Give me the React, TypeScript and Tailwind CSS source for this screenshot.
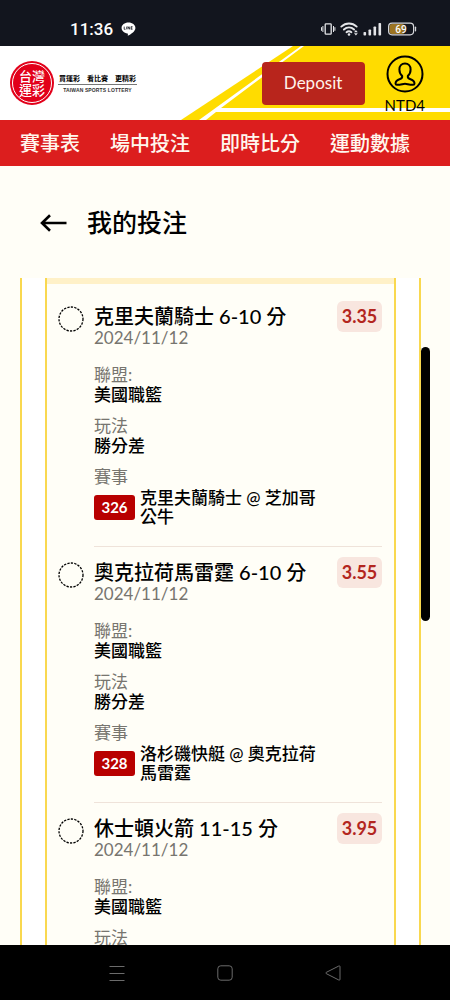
import type { ReactNode } from 'react'

// ─── Data ─────────────────────────────────────────────────────────────────────
const NAV_ITEMS = ['賽事表', '場中投注', '即時比分', '運動數據']

interface Bet {
  id: string
  pick: string
  date: string
  odds: string
  league: string
  market: string
  match: string
}

const BETS: Bet[] = [
  {
    id: '326',
    pick: '克里夫蘭騎士 6-10 分',
    date: '2024/11/12',
    odds: '3.35',
    league: '美國職籃',
    market: '勝分差',
    match: '克里夫蘭騎士 @ 芝加哥公牛',
  },
  {
    id: '328',
    pick: '奧克拉荷馬雷霆 6-10 分',
    date: '2024/11/12',
    odds: '3.55',
    league: '美國職籃',
    market: '勝分差',
    match: '洛杉磯快艇 @ 奧克拉荷馬雷霆',
  },
  {
    id: '',
    pick: '休士頓火箭 11-15 分',
    date: '2024/11/12',
    odds: '3.95',
    league: '美國職籃',
    market: '',
    match: '',
  },
]

// ─── Phone status bar ─────────────────────────────────────────────────────────
function StatusBar() {
  return (
    <div className="flex h-[46px] shrink-0 items-center justify-between bg-[#12151e] pt-3 pr-8 pl-[70px] text-white">
      <div className="flex items-center gap-2">
        <span className="font-[Roboto,sans-serif] text-[17px] leading-5 font-medium">11:36</span>
        <svg width="15" height="14" viewBox="0 0 15 14" aria-label="LINE">
          <path
            d="M7.5.5C3.6.5.6 2.900.6 6c0 2.800 2.400 5 5.800 5.400.5.1.6.4.5.900l-.1 1.100c0 .3.200.4.500.2 3-1.600 7.100-4.300 7.100-7.600C14.400 2.900 11.400.5 7.500.5Z"
            fill="#fff"
          />
          <path
            d="M3.200 4.600v2.700h1.300M5.700 4.600v2.700M7 7.300V4.600l1.700 2.700V4.600M11.500 4.600h-1.300v2.700h1.300M10.200 6h1.200"
            fill="none"
            stroke="#12151e"
            strokeWidth=".8"
          />
        </svg>
      </div>

      <svg width="98" height="16" viewBox="0 0 98 16" fill="none" aria-hidden="true">
        {/* vibrate */}
        <g stroke="#e4e5e8" strokeWidth="1.300">
          <rect x="5.200" y="2.800" width="6" height="10.400" rx=".8" />
          <path d="M2.900 5v6M13.500 5v6M1.500 6.200v3.600M14.900 6.200v3.600" strokeWidth="1" />
        </g>
        {/* wifi */}
        <g stroke="#e4e5e8" strokeWidth="1.900" strokeLinecap="round">
          <path d="M21.300 5.600c4.500-4.200 10.900-4.200 15.400 0M23.900 8.500c3-2.700 7.200-2.700 10.200 0M26.500 11.200c1.500-1.300 3.400-1.300 4.900 0" />
        </g>
        <circle cx="29" cy="13.500" r="1.300" fill="#e4e5e8" />
        <path d="M34 11.300l1.900-2.200 1.900 2.200ZM34 12.300l1.900 2.200 1.900-2.200Z" fill="#e4e5e8" />
        {/* signal */}
        <g fill="#e4e5e8">
          <rect x="43.500" y="11" width="2.600" height="3.500" rx=".8" />
          <rect x="48.500" y="8.500" width="2.600" height="6" rx=".8" />
          <rect x="53.500" y="5.500" width="2.600" height="9" rx=".8" />
          <rect x="58.500" y="2" width="2.600" height="12.500" rx=".8" />
        </g>
        {/* battery */}
        <rect x="69.500" y="3" width="15" height="10" rx="2.500" fill="#9c7422" />
        <rect x="68.600" y="2.200" width="25" height="11.600" rx="3.500" stroke="#d5d6da" strokeWidth="1.200" />
        <path d="M95.500 6.200v3.600" stroke="#d5d6da" strokeWidth="1.300" strokeLinecap="round" />
        <text x="81" y="11.500" fill="#fff" textAnchor="middle" className="font-[Roboto,sans-serif] text-[10px] font-medium">
          69
        </text>
      </svg>
    </div>
  )
}

// ─── Brand header ─────────────────────────────────────────────────────────────
function Brand() {
  return (
    <a href="#" className="flex items-center gap-1">
      <span className="flex size-[44px] items-center justify-center rounded-full bg-[#e2001a]">
        <span className="flex size-10 flex-col items-center justify-center rounded-full border border-white text-[13px] leading-[14px] font-medium text-white">
          <span>台灣</span>
          <span>運彩</span>
        </span>
      </span>
      <span className="flex flex-col items-center">
        <span className="flex gap-[7px] border-b border-[#777] px-px text-[7px] leading-3 font-bold text-black">
          <span>買運彩</span>
          <span>看比賽</span>
          <span>更精彩</span>
        </span>
        <span className="font-['Liberation_Sans',sans-serif] text-[5px] leading-[10px] font-bold tracking-wide whitespace-nowrap text-[#333]">
          TAIWAN SPORTS LOTTERY
        </span>
      </span>
    </a>
  )
}

function Header() {
  return (
    <header className="relative flex h-[74px] shrink-0 items-center justify-between bg-white pr-[25px] pl-[10px]">
      <svg
        className="absolute top-0 right-0 h-full"
        width="270"
        height="74"
        viewBox="180 0 270 74"
        aria-hidden="true"
      >
        <path d="M181 74 293 0H450V74Z" fill="#ffdc00" />
        <path d="M199 74 301 0H304L221 62H450V66H216L206 74Z" fill="#fff" />
      </svg>
      <Brand />
      <div className="relative flex items-center gap-5">
        <button className="h-[43px] w-[103px] rounded bg-[#b8251c] text-[17px] text-[#fff3ea]">Deposit</button>
        <button className="flex flex-col items-center gap-[2px] pt-1 text-[15px] leading-5 text-black">
          <svg width="38" height="38" viewBox="0 0 38 38" fill="none" stroke="#000" strokeWidth="2" aria-hidden="true">
            <circle cx="19" cy="19" r="17.500" />
            <path d="M19 8.500c-3.400 0-5.600 2.500-5.600 5.900 0 2.700 1 5 2.700 6.400.5 1.800-.3 2.600-2 3.200-2.700 1-4.600 2-4.600 4.400 0 .8.500 1.300 1.400 1.300h2.900c1.700 0 3.300-.9 5.200-.9s3.500.9 5.200.9h2.900c.9 0 1.400-.5 1.400-1.300 0-2.400-1.900-3.400-4.600-4.400-1.700-.6-2.500-1.400-2-3.200 1.700-1.400 2.700-3.700 2.700-6.400 0-3.400-2.200-5.900-5.600-5.900Z" strokeLinejoin="round" />
          </svg>
          NTD4
        </button>
      </div>
    </header>
  )
}

function MainNav() {
  return (
    <nav className="flex h-[46px] shrink-0 items-center gap-[30px] bg-[#dc1e1e] px-5">
      {NAV_ITEMS.map((item) => (
        <a key={item} href="#" className="text-[20px] font-medium whitespace-nowrap text-[#fff7ee]">
          {item}
        </a>
      ))}
    </nav>
  )
}

// ─── Bet rows ─────────────────────────────────────────────────────────────────
function Field({ label, children }: { label: string; children?: ReactNode }) {
  return (
    <div>
      <dt className="text-[#77756f]">{label}</dt>
      <dd className="font-medium text-black">{children}</dd>
    </div>
  )
}

function BetItem({ bet }: { bet: Bet }) {
  return (
    <li className="flex items-start gap-[10px] pt-[10px] pr-3 pl-[11px]">
      <svg className="mt-[5px] shrink-0" width="26" height="26" viewBox="0 0 26 26" fill="none" aria-hidden="true">
        <circle cx="13" cy="13" r="12" stroke="#000" strokeWidth="1.300" strokeDasharray="2.300 1.200" />
      </svg>
      <div className="min-w-0 flex-1 border-b border-[#efe3da] pb-5">
        <div className="flex items-start justify-between">
          <div className="pt-[3px]">
            <h2 className="text-[20px] leading-6 font-medium text-black">{bet.pick}</h2>
            <p className="text-[17px] leading-5 text-[#77756f]">{bet.date}</p>
          </div>
          <span className="flex h-[31px] w-[45px] items-center justify-center rounded-md bg-[#f8e6df] text-[18px] font-bold text-[#b3261e]">
            {bet.odds}
          </span>
        </div>
        <dl className="mt-[17px] flex flex-col gap-[11px] text-[17px] leading-5">
          <Field label="聯盟:">{bet.league}</Field>
          <Field label="玩法">{bet.market}</Field>
          {bet.match && (
            <Field label="賽事">
              <div className="flex items-center gap-[5px] pt-px pr-14">
                <span className="flex h-[25px] w-[41px] shrink-0 items-center justify-center rounded-[3px] bg-[#b80000] text-[15px] font-bold text-white">
                  {bet.id}
                </span>
                <span className="leading-[19px]">{bet.match}</span>
              </div>
            </Field>
          )}
        </dl>
      </div>
    </li>
  )
}

// ─── Phone navigation bar ─────────────────────────────────────────────────────
function SystemNav() {
  return (
    <div className="flex h-[55px] shrink-0 items-center justify-center bg-black">
      <button className="flex h-full w-[108px] items-center justify-center" aria-label="Recent apps">
        <svg width="16" height="16" viewBox="0 0 16 16" stroke="#6b6b6b">
          <path d="M.5 1.500h15M.5 8.500h15M.5 15.500h15" />
        </svg>
      </button>
      <button className="flex h-full w-[108px] items-center justify-center" aria-label="Home">
        <svg width="16" height="16" viewBox="0 0 16 16" fill="none" stroke="#6b6b6b">
          <rect x=".8" y=".8" width="14.400" height="14.400" rx="3" />
        </svg>
      </button>
      <button className="flex h-full w-[108px] items-center justify-center" aria-label="Back">
        <svg width="16" height="16" viewBox="0 0 16 16" fill="none" stroke="#6b6b6b">
          <path d="M1.200 7.400 13.800 1q1.200-.5 1.200.7v12.600q0 1.200-1.200.7L1.200 8.600q-.9-.6 0-1.200Z" />
        </svg>
      </button>
    </div>
  )
}

export default function App() {
  return (
    <div className="flex h-screen flex-col overflow-hidden bg-[#fffef7] font-[Lato,'Noto_Sans_CJK_TC',sans-serif]">
      <StatusBar />
      <Header />
      <MainNav />

      <div className="flex h-28 shrink-0 items-center gap-5 px-10 pt-px">
        <button aria-label="Back to previous page">
          <svg width="27" height="18" viewBox="0 0 27 18" fill="none" stroke="#000" strokeWidth="2.600" aria-hidden="true">
            <path d="M26.500 9H2M10 1.200 2 9l8 7.800" />
          </svg>
        </button>
        <h1 className="text-[25px] font-medium text-black">我的投注</h1>
      </div>

      <main className="flex min-h-0 flex-1 px-5">
        <div className="flex min-w-0 flex-1 border-x-2 border-[#f9d84f] bg-white px-[23px]">
          <div className="flex-1 overflow-hidden border-x-2 border-[#f9d84f] bg-[#fffef7]">
            <div className="h-[6px] bg-[#fff1c8]" />
            <ul className="pt-[7px]">
              {BETS.map((bet) => (
                <BetItem key={bet.pick} bet={bet} />
              ))}
            </ul>
          </div>
        </div>
        {/* scroll thumb */}
        <div className="w-[9px] pt-[69px]">
          <div className="h-[274px] rounded-full bg-black" />
        </div>
      </main>

      <SystemNav />
    </div>
  )
}
